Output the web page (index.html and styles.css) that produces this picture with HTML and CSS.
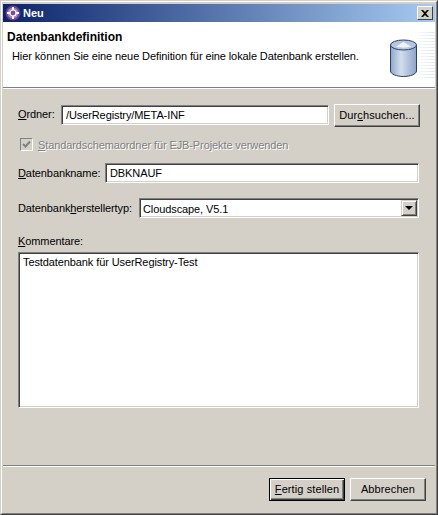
FILE: index.html
```html
<!DOCTYPE html>
<html>
<head lang="de">
    <meta charset="UTF-8">
    <title>Neu</title>
    <link rel="stylesheet" href="styles.css">
</head>
<body>
<div class="window">
  <div class="window-inner">
    <div class="titlebar">
        <svg class="app-icon" width="16" height="16" viewBox="0 0 16 16">
            <circle cx="8" cy="8" r="7.5" fill="#6d3f8f"/>
            <circle cx="8" cy="8" r="5.5" fill="#a887c0"/>
            <path d="M8 2v12M2 8h12" stroke="#fff" stroke-width="2"/>
            <circle cx="8" cy="8" r="3" fill="#7b4a9c" stroke="#fff" stroke-width="1.2"/>
        </svg>
        <span class="title">Neu</span>
        <button class="close"><svg width="8" height="7" viewBox="0 0 8 7"><path d="M0 0h2l2 2 2-2h2L5 3.500 8 7H6L4 5 2 7H0l3-3.500z" fill="#000"/></svg></button>
    </div>
    <div class="header">
        <div class="header-text">
            <h1>Datenbankdefinition</h1>
            <p>Hier können Sie eine neue Definition für eine lokale Datenbank erstellen.</p>
        </div>
        <div class="header-art">
            <svg class="db-icon" width="27" height="38" viewBox="0 0 27 38">
                <defs>
                    <linearGradient id="side" x1="0" x2="1" y1="0" y2="0">
                        <stop offset="0" stop-color="#8fa5c8"/>
                        <stop offset="0.4" stop-color="#d3deec"/>
                        <stop offset="1" stop-color="#8da3c6"/>
                    </linearGradient>
                </defs>
                <path d="M.5 6v26c0 3 6 5.500 13 5.500s13-2.500 13-5.500V6z" fill="url(#side)" stroke="#2b3f6c"/>
                <ellipse cx="13.500" cy="6" rx="13" ry="5" fill="#b5c6de" stroke="#2b3f6c"/>
                <path d="M6 7.500l7.500-4.500 7.500 4.500c-4 1.500-11 1.500-15 0z" fill="#eef3f9"/>
            </svg>
        </div>
    </div>
    <div class="content">
        <div class="row row-folder">
            <label class="lbl lbl-folder"><u>O</u>rdner:</label>
            <input class="field" type="text" value="/UserRegistry/META-INF">
            <button class="btn btn-browse">Dur<u>c</u>hsuchen...</button>
        </div>
        <div class="check-row">
            <span class="check"><svg width="9" height="9" viewBox="0 0 9 9"><path d="M1 4l2.500 2.500L8 1.500" fill="none" stroke="#808080" stroke-width="2"/></svg></span>
            <span class="check-label"><u>S</u>tandardschemaordner für EJB-Projekte verwenden</span>
        </div>
        <div class="row row-name">
            <label class="lbl lbl-name"><u>D</u>atenbankname:</label>
            <input class="field" type="text" value="DBKNAUF">
        </div>
        <div class="row row-type">
            <label class="lbl lbl-type">Datenbank<u>h</u>erstellertyp:</label>
            <div class="combo">
                <span class="combo-value">Cloudscape, V5.1</span>
                <span class="combo-arrow"><i></i></span>
            </div>
        </div>
        <label class="lbl lbl-comment"><u>K</u>ommentare:</label>
        <textarea class="comment">Testdatenbank für UserRegistry-Test</textarea>
    </div>
    <div class="footer">
        <button class="btn btn-default"><u>F</u>ertig stellen</button>
        <button class="btn">Abbrechen</button>
    </div>
  </div>
</div>
</body>
</html>
```
FILE: styles.css
```css
*{
    margin: 0;
    padding: 0;
    box-sizing: border-box;
}
html,body{
    width: 438px;
    height: 515px;
    overflow: hidden;
    background: #d4d0c8;
}
body,input,textarea,button{
    font-family: "Liberation Sans", Arial, sans-serif;
    font-size: 11px;
    letter-spacing: -0.1px;
    color: #000;
}
.window{
    width: 438px;
    height: 515px;
    border: 1px solid;
    border-color: #d4d0c8 #404040 #404040 #d4d0c8;
}
.window-inner{
    height: 100%;
    display: flex;
    flex-direction: column;
    border: 1px solid;
    border-color: #fff #808080 #808080 #fff;
    padding: 2px 1px 1px 1px;
}
.titlebar{
    height: 18px;
    display: flex;
    align-items: center;
    padding: 0 2px 0 2px;
    background: linear-gradient(to right, #0a246a, #a6caf0);
    flex: none;
}
.app-icon{
    flex: none;
}
.title{
    margin-left: 2px;
    color: #fff;
    font-weight: bold;
    letter-spacing: 0;
    flex: 1;
}
.close{
    width: 16px;
    height: 14px;
    display: flex;
    align-items: center;
    justify-content: center;
    background: #d4d0c8;
    border: 1px solid;
    border-color: #fff #404040 #404040 #fff;
}
.header{
    height: 66px;
    display: flex;
    background: #fff;
    border-bottom: 1px solid #808080;
    box-shadow: 0 1px 0 #fff;
    padding: 0 0 0 4px;
    flex: none;
}
.header-text{
    flex: 1;
}
h1{
    font-size: 12px;
    font-weight: bold;
    letter-spacing: 0;
    margin-top: 7px;
    line-height: 16px;
}
.header p{
    margin: 4px 0 0 5px;
    line-height: 14px;
}
.header-art{
    width: 45px;
    padding: 17px 0 0 0;
    background:
        linear-gradient(to right, #fff, rgba(255,255,255,0)) no-repeat right 8px / 22px 48px,
        repeating-linear-gradient(to bottom, #fff 0, #fff 2px, #dfe6f1 2px, #dfe6f1 3px) no-repeat right 8px / 22px 48px;
}
.db-icon{
    display: block;
}
.content{
    flex: 1;
    padding: 16px 15px 0 15px;
    display: flex;
    flex-direction: column;
}
.row{
    display: flex;
    align-items: center;
}
.lbl{
    white-space: nowrap;
}
.lbl-folder{
    width: 43px;
}
.lbl-name{
    width: 87px;
}
.lbl-type{
    width: 121px;
}
.field{
    flex: 1;
    height: 20px;
    min-width: 0;
    padding: 0 4px;
    background: #fff;
    border: 1px solid;
    border-color: #808080 #fff #fff #808080;
    box-shadow: inset 1px 1px 0 #404040, inset -1px -1px 0 #d4d0c8;
    outline: none;
}
.row-folder{
    height: 23px;
    align-items: flex-start;
}
.row-folder .lbl{
    margin-top: 4px;
}
.row-folder .field{
    margin: 1px 5px 0 0;
}
.btn{
    width: 76px;
    height: 23px;
    padding-bottom: 2px;
    letter-spacing: 0.1px;
    background: #d4d0c8;
    border: 1px solid;
    border-color: #fff #404040 #404040 #fff;
    box-shadow: inset -1px -1px 0 #808080;
}
.btn-browse{
    width: 86px;
}
.btn-default{
    border-color: #000;
    box-shadow: inset 1px 1px 0 #fff, inset -1px -1px 0 #404040, inset -2px -2px 0 #808080;
}
.check-row{
    display: flex;
    align-items: center;
    height: 13px;
    margin: 11px 0 0 2px;
}
.check{
    width: 13px;
    height: 13px;
    display: flex;
    align-items: center;
    justify-content: center;
    background: #d4d0c8;
    border: 1px solid;
    border-color: #808080 #fff #fff #808080;
}
.check-label{
    margin-left: 5px;
    color: #808080;
    text-shadow: 1px 1px 0 #fff;
}
.row-name{
    margin: 12px 1px 0 0;
    height: 20px;
}
.row-type{
    margin: 15px 1px 0 0;
    height: 20px;
}
.combo{
    flex: 1;
    height: 20px;
    display: flex;
    padding: 1px;
    background: #fff;
    border: 1px solid;
    border-color: #808080 #fff #fff #808080;
    box-shadow: inset 1px 1px 0 #404040, inset -1px -1px 0 #d4d0c8;
}
.combo-value{
    flex: 1;
    padding-left: 2px;
    line-height: 18px;
}
.combo-arrow{
    width: 16px;
    height: 16px;
    display: flex;
    align-items: center;
    justify-content: center;
    background: #d4d0c8;
    border: 1px solid;
    border-color: #d4d0c8 #404040 #404040 #d4d0c8;
    box-shadow: inset 1px 1px 0 #fff, inset -1px -1px 0 #808080;
}
.combo-arrow i{
    border-style: solid;
    border-width: 4px 4px 0 4px;
    border-color: #000 transparent transparent transparent;
}
.lbl-comment{
    margin-top: 16px;
    line-height: 14px;
}
.comment{
    display: block;
    width: 401px;
    height: 156px;
    margin-top: 4px;
    padding: 3px 4px;
    resize: none;
    background: #fff;
    border: 1px solid;
    border-color: #808080 #fff #fff #808080;
    box-shadow: inset 1px 1px 0 #404040, inset -1px -1px 0 #d4d0c8;
    outline: none;
    overflow: hidden;
}
.footer{
    height: 47px;
    display: flex;
    justify-content: flex-end;
    gap: 5px;
    padding: 12px 9px 0 0;
    border-top: 1px solid #808080;
    box-shadow: inset 0 1px 0 #fff;
    flex: none;
}
```
